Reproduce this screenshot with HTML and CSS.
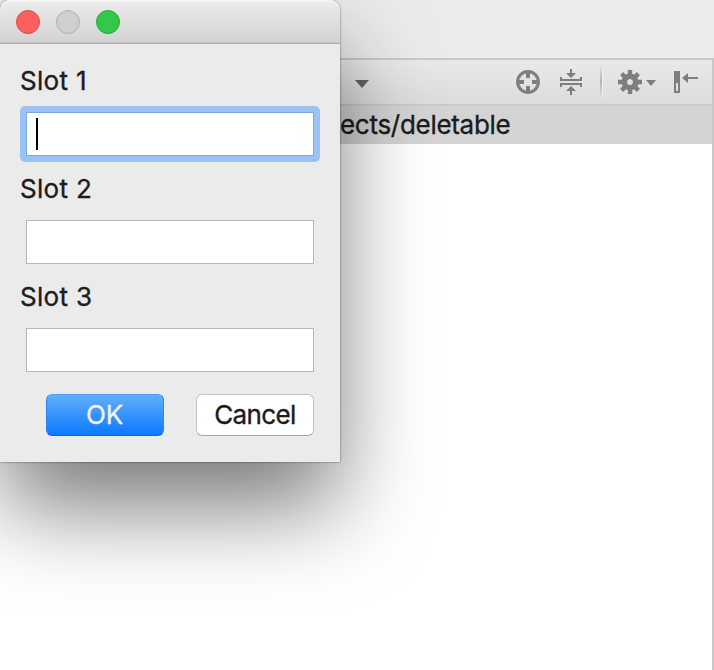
FILE: index.html
```html
<!DOCTYPE html>
<html lang="en">
<head>
<meta charset="utf-8">
<title>Slots</title>
<link rel="stylesheet" href="styles.css">
</head>
<body>
<main class="ide">
  <header class="topbar"></header>
  <section class="panel">
    <div class="toolbar">
      <svg class="drop" width="14" height="8" viewBox="0 0 14 8"><path d="M0 0h14L7 8z" fill="#626262"/></svg>
      <svg class="tools" width="197" height="44" viewBox="515 60 197 44">
        <g fill="none" stroke="#7e7e7e">
          <circle cx="528" cy="82" r="10.4" stroke-width="3"/>
          <path d="M528 71v7M528 86v7M517 82h7M532 82h7" stroke-width="4"/>
          <path d="M561 77v3h20v-3M561 87v-3h20v3" stroke-width="2"/>
          <path d="M571 69v5M571 90v5" stroke-width="2"/>
          <path d="M685 78h13" stroke-width="2"/>
        </g>
        <g fill="#7e7e7e">
          <path d="M566 73h10l-5 5zM566 91h10l-5-5z"/>
          <path d="M646 80h10l-5 6zM682 78l6-5v10z"/>
          <path fill-rule="evenodd" d="M674 71h6v22h-6zM676 83v8h2v-8z"/>
          <path fill-rule="evenodd" d="M630 73.500a8.500 8.500 0 1 0 .01 0zM630 79a3 3 0 1 1-.01 0z"/>
        </g>
        <g stroke="#7e7e7e" stroke-width="4.400"><path d="M630 70v5M630 89v5M618 82h5M637 82h5M621.600 73.600l4 4M634.400 86.400l4 4M638.400 73.600l-4 4M625.600 86.400l-4 4"/></g>
        <rect x="600" y="66" width="2" height="32" fill="url(#sep)"/>
        <rect x="602" y="66" width="1" height="32" fill="#eeeeee"/>
        <defs><linearGradient id="sep" gradientUnits="userSpaceOnUse" x1="0" y1="64" x2="0" y2="98"><stop stop-color="#b4b4b4" stop-opacity="0"/><stop offset=".5" stop-color="#b4b4b4"/><stop offset="1" stop-color="#b4b4b4" stop-opacity="0"/></linearGradient></defs>
      </svg>
    </div>
    <div class="path"><span>ects/deletable</span></div>
  </section>
</main>
<form class="dialog">
  <div class="titlebar"><i class="light red"></i><i class="light gray"></i><i class="light green"></i></div>
  <div class="content">
    <div class="label">Slot 1</div>
    <div class="field focused"><i class="caret"></i></div>
    <div class="label">Slot 2</div>
    <div class="field"></div>
    <div class="label">Slot 3</div>
    <div class="field"></div>
    <div class="actions">
      <button type="button" class="button primary">OK</button>
      <button type="button" class="button">Cancel</button>
    </div>
  </div>
</form>
</body>
</html>
```

FILE: styles.css
```css
* { box-sizing: border-box; }
body {
  margin: 0;
  width: 714px;
  height: 670px;
  overflow: hidden;
  position: relative;
  background: #fff;
  color: #1c1c1c;
  font-family: Inter, "Liberation Sans", sans-serif;
  font-size: 26px;
  font-weight: 400;
  -webkit-text-stroke: 0.35px currentColor;
}
.ide { height: 670px; display: flex; flex-direction: column; }
.topbar { height: 58px; background: #ebebeb; }
.panel { flex: 1; border-top: 2px solid #c8c8c8; border-right: 2px solid #c8c8c8; }
.toolbar {
  height: 46px;
  padding-left: 355px;
  border-bottom: 2px solid #c9c9c9;
  background: linear-gradient(#e9e9e9, #dcdcdc);
  display: flex;
  align-items: center;
}
.drop { margin-top: 3px; flex: none; }
.tools { margin-left: 146px; flex: none; }
.path {
  height: 38px;
  padding-left: 340px;
  background: #d4d4d4;
  line-height: 38px;
  letter-spacing: -0.29px;
  white-space: nowrap;
}
.dialog {
  position: absolute;
  left: 0;
  top: 0;
  width: 340px;
  height: 462px;
  background: #ebebeb;
  border-radius: 10px 10px 0 0;
  box-shadow: 0 0 2px rgba(0, 0, 0, .65), 0 48px 92px -3px rgba(0, 0, 0, .53);
}
.titlebar {
  height: 44px;
  padding-left: 16px;
  display: flex;
  align-items: center;
  gap: 16px;
  border-radius: 10px 10px 0 0;
  border-bottom: 1px solid #adadad;
  background: linear-gradient(#ececec, #d2d2d2);
  box-shadow: inset 0 2px 0 #f4f4f4, inset 0 -1px 0 #c6c6c6;
}
.light { width: 24px; height: 24px; margin-top: 1px; border-radius: 50%; border: 1px solid; }
.red { background: #fc605c; border-color: #e14942; }
.gray { background: #cfcfcf; border-color: #b1b1b1; }
.green { background: #34c84a; border-color: #24a936; }
.content { padding: 14px 26px 0; }
.label { height: 46px; margin-left: -6px; line-height: 46px; letter-spacing: 0.3px; }
.field { height: 44px; margin: 8px 0 10px; border: 1px solid #b8b8b8; background: #fff; }
.focused {
  border-color: #78aae0;
  outline: 6px solid #9ac3f5;
  border-radius: 0;
  padding: 5px 9px;
  box-shadow: none;
}
.caret { display: block; width: 2px; height: 32px; background: #000; }
.actions { display: flex; justify-content: flex-end; gap: 32px; margin-top: 22px; }
.button {
  width: 118px;
  height: 42px;
  padding: 0;
  border: 1px solid #c2c2c2;
  border-bottom-color: #a9a9a9;
  border-radius: 6px;
  background: #fff;
  color: #1c1c1c;
  font: inherit;
  line-height: 40px;
  letter-spacing: -0.6px;
}
.primary {
  border-color: #4b9ff8 #2a83f7 #0a66f0;
  background: linear-gradient(#62aefb, #0a7aff);
  color: #f2f2f7;
  letter-spacing: -0.1px;
  padding-right: 1px;
}
.focused {
  position: relative;
  outline: none;
}
.focused::before {
  content: "";
  position: absolute;
  inset: -7px;
  border: 6px solid #9ac3f5;
  border-radius: 5px;
}
```
